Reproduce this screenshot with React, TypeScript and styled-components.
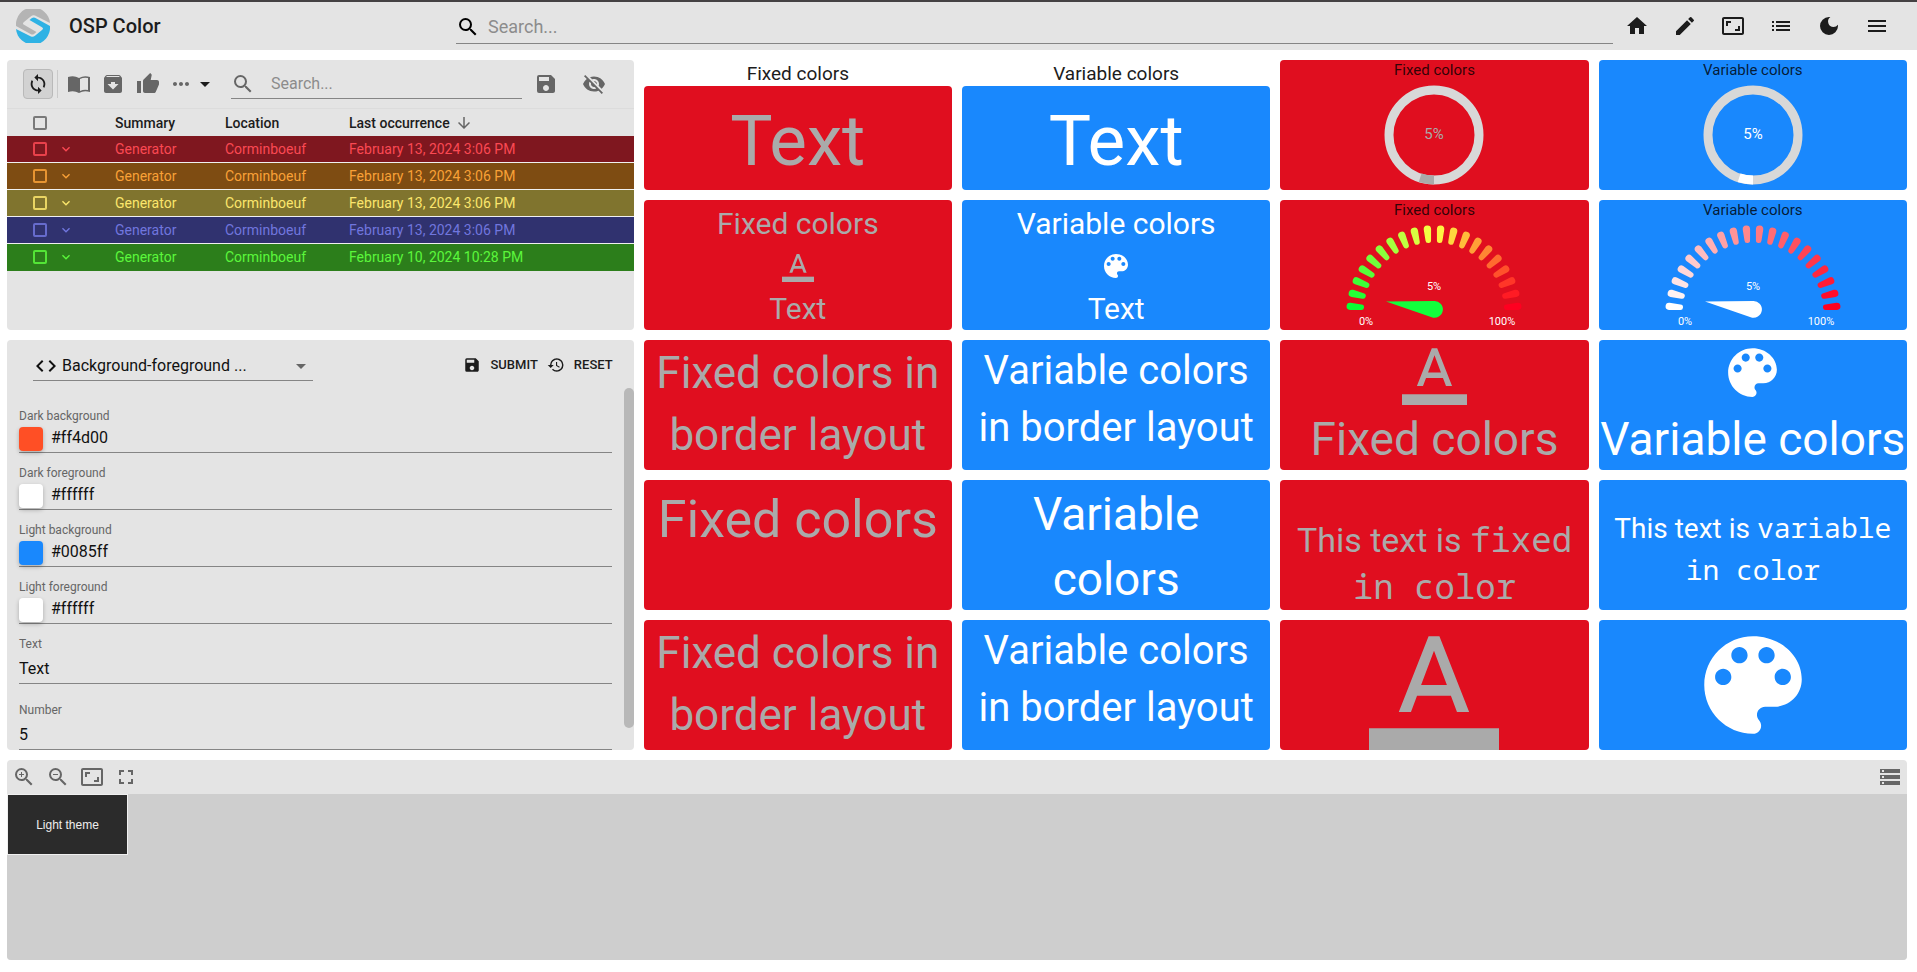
import React from 'react';
import styled, { createGlobalStyle } from 'styled-components';
import {
  MdHome, MdEdit, MdAspectRatio, MdList, MdDarkMode, MdMenu, MdSearch, MdLoop, MdArchive,
  MdThumbUp, MdMoreHoriz, MdArrowDropDown, MdSave, MdVisibilityOff, MdCode, MdHistory,
  MdZoomIn, MdZoomOut, MdFullscreen, MdStorage, MdArrowDownward, MdExpandMore,
} from 'react-icons/md';

const RED = '#e00e1f';
const BLUE = '#1988fd';
const GREY = '#aaaaaa';

const GlobalStyle = createGlobalStyle`
  *, *::before, *::after { box-sizing: border-box; }
  body { margin: 0; background: #fff; color: #1c1c1c; font: 400 14px/20px Roboto, sans-serif; }
  button, input, select { font: inherit; color: inherit; }
  svg { display: block; flex: none; }
`;

const Header = styled.header`
  height: 50px;
  border-top: 2px solid #444143;
  background: #e4e4e4;
  display: flex;
  align-items: center;
  padding: 0 28px 0 16px;
`;
const Title = styled.h1`
  margin: 0;
  padding-left: 19px;
  width: 406px;
  font-size: 20px;
  line-height: 24px;
  font-weight: 500;
`;
const SearchBox = styled.label<{ $large?: boolean }>`
  flex: 1;
  display: flex;
  align-items: center;
  gap: ${p => (p.$large ? 8 : 16)}px;
  height: ${p => (p.$large ? 35 : 30)}px;
  padding-top: ${p => (p.$large ? 2 : 0)}px;
  border-bottom: 1px solid #858585;
  color: ${p => (p.$large ? '#000' : '#666')};
`;
const SearchInput = styled.input<{ $size: number }>`
  flex: 1;
  min-width: 0;
  border: 0;
  padding: 0;
  outline: 0;
  background: none;
  font-size: ${p => p.$size}px;
  &::placeholder { color: #8c8c8c; opacity: 1; }
`;
const HeaderActions = styled.nav`
  display: flex;
  gap: 24px;
  padding-left: 12px;
`;
const IconButton = styled.button`
  border: 0;
  padding: 0;
  background: none;
  display: flex;
  align-items: center;
  justify-content: center;
`;

const Dashboard = styled.main`
  display: grid;
  grid-template-columns: repeat(6, minmax(0, 1fr));
  grid-template-rows: repeat(5, 130px) 200px;
  gap: 10px;
  padding: 10px 10px 12px 7px;
`;
const Panel = styled.section<{ $rows: number; $wide?: boolean }>`
  grid-column: span ${p => (p.$wide ? 6 : 2)};
  grid-row: span ${p => p.$rows};
  display: flex;
  flex-direction: column;
  border-radius: 4px;
  overflow: hidden;
  background: #e4e4e4;
`;

const EventToolbar = styled.div`
  height: 49px;
  border-bottom: 1px solid #dcdcdc;
  display: flex;
  align-items: center;
  padding: 0 28px 0 16px;
  color: #666;
`;
const SyncButton = styled(IconButton)`
  width: 30px;
  height: 30px;
  border: 1px solid #b9b9b9;
  border-radius: 4px;
  background: #d2d2d2;
  color: #1c1c1c;
`;
const Divider = styled.span`
  width: 1px;
  height: 28px;
  margin: 0 10px 0 4px;
  background: #cacaca;
`;
const ToolGroup = styled.div`
  display: flex;
  align-items: center;
  gap: 11px;
`;
const MoreGroup = styled.div`
  display: flex;
  align-items: center;
  padding: 0 14px 0 9px;
`;
const CaretButton = styled(IconButton)`
  color: #1c1c1c;
`;
const SideTools = styled.div`
  display: flex;
  align-items: center;
  gap: 24px;
  padding-left: 12px;
`;

const EventTable = styled.table`
  width: 100%;
  border-spacing: 0;
  table-layout: fixed;
  text-align: left;
  th, td { padding: 0; }
  th { height: 27px; font-weight: 500; }
`;
const CheckCol = styled.col` width: 40px; `;
const ExpandCol = styled.col` width: 68px; `;
const SummaryCol = styled.col` width: 110px; `;
const LocationCol = styled.col` width: 124px; `;
const EventRow = styled.tr<{ $bg: string; $fg: string }>`
  background: ${p => p.$bg};
  color: ${p => p.$fg};
  td { height: 27px; border-bottom: 1px solid #f0f0f0; }
  &:last-child td { border-bottom-color: ${p => p.$bg}; }
`;
const CheckCell = styled.td`
  && { padding-left: 26px; }
`;
const Check = styled.input`
  appearance: none;
  display: block;
  width: 14px;
  height: 14px;
  margin: 0;
  border: 2px solid currentColor;
  border-radius: 2px;
  opacity: 0.85;
  thead & { color: #666; }
`;
const ExpandCell = styled.td`
  && { padding-left: 11px; }
`;
const SortLabel = styled.span`
  display: flex;
  align-items: center;
  gap: 5px;
  svg { color: #666; }
`;

const FormBar = styled.div`
  height: 48px;
  display: flex;
  align-items: flex-start;
  padding: 8px 21px 0 26px;
`;
const TemplatePicker = styled.label`
  width: 280px;
  height: 33px;
  display: flex;
  align-items: center;
  gap: 4px;
  padding: 4px 0 0 1px;
  border-bottom: 1px solid #858585;
  color: #111;
  margin-right: auto;
`;
const TemplateSelect = styled.select`
  flex: 1;
  min-width: 0;
  appearance: none;
  border: 0;
  padding: 0;
  background: none;
  font-size: 16px;
`;
const DropArrow = styled(MdArrowDropDown)`
  color: #666;
`;
const TextButton = styled(IconButton)`
  height: 33px;
  gap: 9px;
  margin-left: 9px;
  font-size: 13px;
  font-weight: 500;
`;
const FormBody = styled.div`
  flex: 1;
  display: flex;
  min-height: 0;
`;
const Fields = styled.div`
  flex: 1;
  padding: 20px 12px 0;
`;
const Field = styled.div<{ $plain?: boolean }>`
  margin-bottom: ${p => (p.$plain ? 18 : 12)}px;
  color: #111;
`;
const FieldLabel = styled.label`
  display: block;
  font-size: 12px;
  line-height: 17px;
  color: #666;
`;
const FieldLine = styled.div<{ $plain?: boolean }>`
  display: flex;
  align-items: ${p => (p.$plain ? 'center' : 'flex-start')};
  gap: 8px;
  height: ${p => (p.$plain ? 31 : 28)}px;
  border-bottom: 1px solid #858585;
`;
const Swatch = styled.span<{ $color: string }>`
  width: 24px;
  height: 24px;
  margin-top: 2px;
  border-radius: 4px;
  background: ${p => p.$color};
  box-shadow: 0 2px 4px rgba(0, 0, 0, 0.25);
`;
const FieldInput = styled.input`
  flex: 1;
  min-width: 0;
  height: 24px;
  border: 0;
  padding: 0;
  background: none;
  font-size: 16px;
`;
const ScrollTrack = styled.div`
  width: 10px;
`;
const ScrollThumb = styled.div`
  height: 94%;
  border-radius: 5px;
  background: #b8b8b8;
`;

const Captioned = styled.section`
  display: flex;
  flex-direction: column;
  min-height: 0;
`;
const Caption = styled.h2`
  margin: 0;
  height: 26px;
  font-size: 19px;
  font-weight: 400;
  line-height: 27px;
  text-align: center;
`;
const Tile = styled.section<{ $fixed?: boolean; $align?: string; $drop?: number }>`
  flex: 1;
  min-width: 0;
  min-height: 0;
  padding-top: ${p => p.$drop ?? 0}px;
  display: flex;
  flex-direction: column;
  align-items: center;
  justify-content: ${p => p.$align ?? 'flex-start'};
  border-radius: 4px;
  overflow: hidden;
  text-align: center;
  background: ${p => (p.$fixed ? RED : BLUE)};
  color: ${p => (p.$fixed ? GREY : '#fff')};
`;
const TileText = styled.p<{ $size: number; $line: number; $wrap?: boolean }>`
  margin: 0;
  padding: 0 ${p => (p.$wrap ? 10 : 0)}px;
  font-size: ${p => p.$size}px;
  line-height: ${p => p.$line}px;
  white-space: ${p => (p.$wrap ? 'normal' : 'nowrap')};
  code { font-family: "Noto Sans Mono", "DejaVu Sans Mono", monospace; }
`;
const IconSlot = styled.div`
  height: 42px;
  display: flex;
  align-items: center;
`;
const ChartTitle = styled.h2`
  margin: 0;
  font-size: 15px;
  font-weight: 400;
  line-height: 20px;
  color: rgba(0, 0, 0, 0.8);
`;
const ChartText = styled.text`
  text-anchor: middle;
`;

const MapToolbar = styled.div`
  height: 34px;
  display: flex;
  align-items: center;
  gap: 10px;
  padding: 0 5px;
  color: #666;
`;
const Spacer = styled.span`
  flex: 1;
`;
const MapCanvas = styled.div`
  flex: 1;
  background: #cecece;
`;
const ThemeButton = styled.button`
  display: block;
  width: 121px;
  height: 61px;
  border: 1px solid #f0f0f0;
  padding: 0;
  background: #2b2b2b;
  color: #eee;
  font: 12px/16px "Liberation Sans", Arial, sans-serif;
`;

const Logo = () => (
  <svg width="34" height="34" viewBox="0 0 34 34" aria-hidden="true">
    <path d="M0 17A17 17 0 0 1 34 14L19 6.600q-2-1-4 .6L8 13q-2 1.500 0 2.800L20.500 23l-2.500 2q-1.500 1-3 .3z" fill="#b4b4b4" />
    <path d="M34 17A17 17 0 0 1 0 20L15 27.400q2 1 4-.6L26 21q2-1.500 0-2.800L13.500 11l2.500-2q1.500-1 3-.3z" fill="#2fb2e4" />
  </svg>
);

const BookIcon = () => (
  <svg width="22" height="22" viewBox="0 0 22 22" fill="currentColor" aria-hidden="true">
    <path d="M0 4q6-2 11 1 5-3 11-1v15q-6-2-11 1-5-3-11-1zM12 6v12q4-2 8-1V5q-4-1-8 1z" fillRule="evenodd" />
  </svg>
);

const ColorTextIcon = ({ size }: { size: number }) => (
  <svg width={size} height={size} viewBox="0 0 24 24" fill="currentColor" aria-hidden="true">
    <path d="M0 20h24v4H0z" />
    <path d="M11 3L5.500 17h2.250l1.120-3h6.250l1.120 3h2.250L13 3h-2zm-1.380 9L12 5.670 14.380 12H9.620z" />
  </svg>
);

const PaletteIcon = ({ size }: { size: number }) => (
  <svg width={size} height={size} viewBox="0 0 24 24" fill="currentColor" aria-hidden="true">
    <path d="M12 3c-4.970 0-9 4.030-9 9s4.030 9 9 9c.83 0 1.500-.67 1.500-1.500 0-.39-.15-.74-.39-1.010-.23-.26-.38-.61-.38-.99 0-.83.67-1.500 1.500-1.500H16c2.760 0 5-2.240 5-5 0-4.420-4.030-8-9-8zm-5.500 9c-.83 0-1.500-.67-1.500-1.500S5.670 9 6.500 9 8 9.670 8 10.500 7.330 12 6.500 12zm3-4C8.670 8 8 7.330 8 6.500S8.670 5 9.500 5s1.500.67 1.500 1.500S10.330 8 9.500 8zm5 0c-.83 0-1.500-.67-1.500-1.500S13.670 5 14.500 5s1.500.67 1.500 1.500S15.330 8 14.500 8zm3 4c-.83 0-1.500-.67-1.500-1.500S16.670 9 17.500 9s1.500.67 1.500 1.500-.67 1.500-1.500 1.500z" />
  </svg>
);

const Ring = ({ color }: { color: string }) => (
  <svg width="200" height="110" viewBox="0 0 200 110">
    <circle cx="100" cy="55" r="45" fill="none" stroke="#d8d8d8" strokeWidth="9" />
    <circle cx="100" cy="55" r="45" fill="none" stroke={color} strokeWidth="9" pathLength="100"
      strokeDasharray="5 95" transform="rotate(90 100 55)" />
    <ChartText x="100" y="59" fontSize="15" fill={color}>5%</ChartText>
  </svg>
);

type Rgb = [number, number, number];
const blend = (stops: Rgb[], t: number) => {
  const pos = t * (stops.length - 1);
  const i = Math.min(Math.floor(pos), stops.length - 2);
  const c = stops[i].map((v, k) => Math.round(v + (stops[i + 1][k] - v) * (pos - i)));
  return `rgb(${c.join(',')})`;
};

const Gauge = ({ stops, needle }: { stops: Rgb[]; needle: string }) => (
  <svg width="200" height="110" viewBox="0 0 200 110">
    {Array.from({ length: 20 }, (_, i) => (
      <path key={i} d="M16 89.300a3.700 3.700 0 0 0 0 7.400L27 95.800a2.800 2.800 0 0 0 0-5.600z"
        fill={blend(stops, i / 19)} transform={`rotate(${4.5 + 9 * i} 100 93)`} />
    ))}
    <path d="M52 81.500 100 81a8.400 8.400 0 1 1-2.300 16.300z" fill={needle} />
    <ChartText x="100" y="70" fontSize="11" fill="#fff">5%</ChartText>
    <ChartText x="32" y="105" fontSize="11" fill="#fff">0%</ChartText>
    <ChartText x="168" y="105" fontSize="11" fill="#fff">100%</ChartText>
  </svg>
);

const events = [
  { bg: '#7f171f', fg: '#fb4953', date: 'February 13, 2024 3:06 PM' },
  { bg: '#7e4c12', fg: '#f9a137', date: 'February 13, 2024 3:06 PM' },
  { bg: '#80742e', fg: '#fbe66c', date: 'February 13, 2024 3:06 PM' },
  { bg: '#30326f', fg: '#7076de', date: 'February 13, 2024 3:06 PM' },
  { bg: '#2c7e1b', fg: '#5bf73b', date: 'February 10, 2024 10:28 PM' },
];

const colorFields = [
  { id: 'dark-bg', label: 'Dark background', value: '#ff4d00', swatch: '#ff4f25' },
  { id: 'dark-fg', label: 'Dark foreground', value: '#ffffff', swatch: '#ffffff' },
  { id: 'light-bg', label: 'Light background', value: '#0085ff', swatch: '#1988fd' },
  { id: 'light-fg', label: 'Light foreground', value: '#ffffff', swatch: '#ffffff' },
];
const plainFields = [
  { id: 'text', label: 'Text', value: 'Text' },
  { id: 'number', label: 'Number', value: '5' },
];

const EventPanel = () => (
  <Panel $rows={2}>
    <EventToolbar>
      <SyncButton aria-label="Auto refresh"><MdLoop size={22} /></SyncButton>
      <Divider />
      <ToolGroup>
        <IconButton aria-label="Log"><BookIcon /></IconButton>
        <IconButton aria-label="Archive"><MdArchive size={24} /></IconButton>
        <IconButton aria-label="Acknowledge"><MdThumbUp size={24} /></IconButton>
      </ToolGroup>
      <MoreGroup>
        <IconButton aria-label="More"><MdMoreHoriz size={24} /></IconButton>
        <CaretButton aria-label="Open menu"><MdArrowDropDown size={24} /></CaretButton>
      </MoreGroup>
      <SearchBox>
        <MdSearch size={24} />
        <SearchInput $size={16} placeholder="Search..." aria-label="Search events" />
      </SearchBox>
      <SideTools>
        <IconButton aria-label="Save"><MdSave size={24} /></IconButton>
        <IconButton aria-label="Hide"><MdVisibilityOff size={24} /></IconButton>
      </SideTools>
    </EventToolbar>
    <EventTable>
      <colgroup>
        <CheckCol />
        <ExpandCol />
        <SummaryCol />
        <LocationCol />
        <col />
      </colgroup>
      <thead>
        <tr>
          <CheckCell as="th"><Check type="checkbox" aria-label="Select all" /></CheckCell>
          <th />
          <th>Summary</th>
          <th>Location</th>
          <th><SortLabel>Last occurrence <MdArrowDownward size={18} /></SortLabel></th>
        </tr>
      </thead>
      <tbody>
        {events.map((e, i) => (
          <EventRow key={i} $bg={e.bg} $fg={e.fg}>
            <CheckCell><Check type="checkbox" aria-label={`Select event ${i + 1}`} /></CheckCell>
            <ExpandCell><IconButton aria-label="Expand"><MdExpandMore size={16} /></IconButton></ExpandCell>
            <td>Generator</td>
            <td>Corminboeuf</td>
            <td>{e.date}</td>
          </EventRow>
        ))}
      </tbody>
    </EventTable>
  </Panel>
);

const FormPanel = () => (
  <Panel $rows={3}>
    <FormBar>
      <TemplatePicker>
        <MdCode size={24} />
        <TemplateSelect aria-label="Template">
          <option>Background-foreground ...</option>
        </TemplateSelect>
        <DropArrow size={24} />
      </TemplatePicker>
      <TextButton><MdSave size={18} />SUBMIT</TextButton>
      <TextButton><MdHistory size={18} />RESET</TextButton>
    </FormBar>
    <FormBody>
      <Fields>
        {colorFields.map(f => (
          <Field key={f.id}>
            <FieldLabel htmlFor={f.id}>{f.label}</FieldLabel>
            <FieldLine>
              <Swatch $color={f.swatch} />
              <FieldInput id={f.id} defaultValue={f.value} />
            </FieldLine>
          </Field>
        ))}
        {plainFields.map(f => (
          <Field key={f.id} $plain>
            <FieldLabel htmlFor={f.id}>{f.label}</FieldLabel>
            <FieldLine $plain><FieldInput id={f.id} defaultValue={f.value} /></FieldLine>
          </Field>
        ))}
      </Fields>
      <ScrollTrack><ScrollThumb /></ScrollTrack>
    </FormBody>
  </Panel>
);

const fixedStops: Rgb[] = [[10, 255, 52], [255, 255, 68], [255, 0, 32]];
const variableStops: Rgb[] = [[255, 255, 255], [255, 128, 133], [255, 0, 32]];

export default function App() {
  return (
    <>
      <GlobalStyle />
      <Header>
        <Logo />
        <Title>OSP Color</Title>
        <SearchBox $large>
          <MdSearch size={24} />
          <SearchInput $size={18} placeholder="Search..." aria-label="Search" />
        </SearchBox>
        <HeaderActions>
          <IconButton aria-label="Home"><MdHome size={24} /></IconButton>
          <IconButton aria-label="Edit"><MdEdit size={24} /></IconButton>
          <IconButton aria-label="Fit"><MdAspectRatio size={24} /></IconButton>
          <IconButton aria-label="List"><MdList size={24} /></IconButton>
          <IconButton aria-label="Dark mode"><MdDarkMode size={24} /></IconButton>
          <IconButton aria-label="Menu"><MdMenu size={24} /></IconButton>
        </HeaderActions>
      </Header>
      <Dashboard>
        <EventPanel />
        <Captioned>
          <Caption>Fixed colors</Caption>
          <Tile $fixed $drop={10}><TileText $size={71} $line={90}>Text</TileText></Tile>
        </Captioned>
        <Captioned>
          <Caption>Variable colors</Caption>
          <Tile $drop={10}><TileText $size={71} $line={90}>Text</TileText></Tile>
        </Captioned>
        <Tile $fixed><ChartTitle>Fixed colors</ChartTitle><Ring color={GREY} /></Tile>
        <Tile><ChartTitle>Variable colors</ChartTitle><Ring color="#fff" /></Tile>

        <Tile $fixed $drop={2}>
          <TileText $size={30} $line={43}>Fixed colors</TileText>
          <IconSlot><ColorTextIcon size={32} /></IconSlot>
          <TileText $size={30} $line={43}>Text</TileText>
        </Tile>
        <Tile $drop={2}>
          <TileText $size={30} $line={43}>Variable colors</TileText>
          <IconSlot><PaletteIcon size={32} /></IconSlot>
          <TileText $size={30} $line={43}>Text</TileText>
        </Tile>
        <Tile $fixed><ChartTitle>Fixed colors</ChartTitle><Gauge stops={fixedStops} needle="#12ff3c" /></Tile>
        <Tile><ChartTitle>Variable colors</ChartTitle><Gauge stops={variableStops} needle="#fff" /></Tile>

        <FormPanel />
        <Tile $fixed $drop={2}><TileText $size={44} $line={62} $wrap>Fixed colors in border layout</TileText></Tile>
        <Tile $drop={2}><TileText $size={40} $line={57} $wrap>Variable colors in border layout</TileText></Tile>
        <Tile $fixed><ColorTextIcon size={65} /><TileText $size={46} $line={69}>Fixed colors</TileText></Tile>
        <Tile><PaletteIcon size={65} /><TileText $size={46} $line={69}>Variable colors</TileText></Tile>

        <Tile $fixed $drop={2}><TileText $size={52} $line={76} $wrap>Fixed colors</TileText></Tile>
        <Tile $drop={2}><TileText $size={46} $line={65} $wrap>Variable colors</TileText></Tile>
        <Tile $fixed $align="flex-end">
          <TileText $size={34} $line={46} $wrap>This text is <code>fixed</code> <code>in color</code></TileText>
        </Tile>
        <Tile $align="center" $drop={8}>
          <TileText $size={28} $line={40} $wrap>This text is <code>variable</code> <code>in color</code></TileText>
        </Tile>

        <Tile $fixed $drop={2}><TileText $size={44} $line={62} $wrap>Fixed colors in border layout</TileText></Tile>
        <Tile $drop={2}><TileText $size={40} $line={57} $wrap>Variable colors in border layout</TileText></Tile>
        <Tile $fixed><ColorTextIcon size={130} /></Tile>
        <Tile><PaletteIcon size={130} /></Tile>

        <Panel $rows={1} $wide>
          <MapToolbar>
            <IconButton aria-label="Zoom in"><MdZoomIn size={24} /></IconButton>
            <IconButton aria-label="Zoom out"><MdZoomOut size={24} /></IconButton>
            <IconButton aria-label="Fit to view"><MdAspectRatio size={24} /></IconButton>
            <IconButton aria-label="Full screen"><MdFullscreen size={24} /></IconButton>
            <Spacer />
            <IconButton aria-label="Layers"><MdStorage size={24} /></IconButton>
          </MapToolbar>
          <MapCanvas><ThemeButton>Light theme</ThemeButton></MapCanvas>
        </Panel>
      </Dashboard>
    </>
  );
}
